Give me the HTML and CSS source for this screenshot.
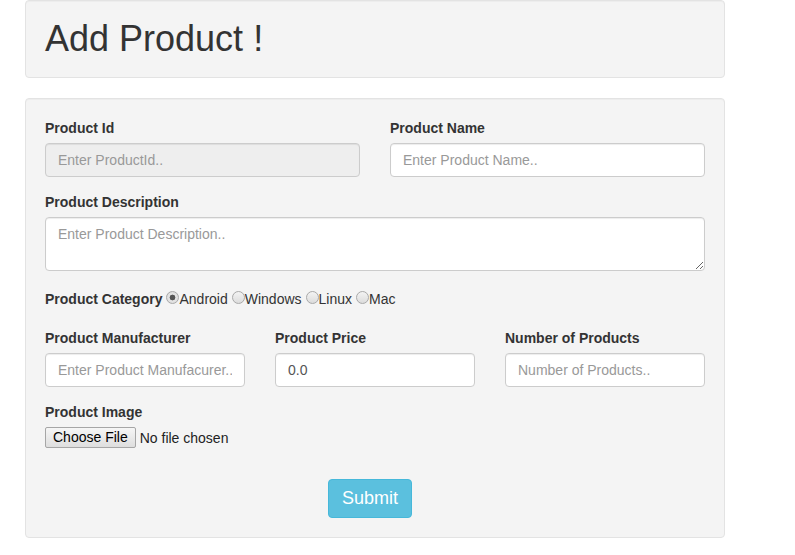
FILE: index.html
```html
<!DOCTYPE html>
<html>
<head>
<meta charset="utf-8">
<title>Add Product</title>
<link rel="stylesheet" href="styles.css">
</head>
<body>
<div class="page">
  <div class="well header">
    <h1 class="title">Add Product !</h1>
  </div>
  <form class="well form">
    <div class="row two">
      <div class="group">
        <label class="lbl">Product Id</label>
        <input class="ctl" type="text" placeholder="Enter ProductId.." disabled>
      </div>
      <div class="group">
        <label class="lbl">Product Name</label>
        <input class="ctl" type="text" placeholder="Enter Product Name..">
      </div>
    </div>
    <div class="group">
      <label class="lbl">Product Description</label>
      <textarea class="ctl area" rows="2" placeholder="Enter Product Description.."></textarea>
    </div>
    <div class="group category">
      <label class="lbl">Product Category</label>
      <label class="opt"><input class="radio" type="radio" name="cat" checked>Android</label>
      <label class="opt"><input class="radio" type="radio" name="cat">Windows</label>
      <label class="opt"><input class="radio" type="radio" name="cat">Linux</label>
      <label class="opt"><input class="radio" type="radio" name="cat">Mac</label>
    </div>
    <div class="row three">
      <div class="group">
        <label class="lbl">Product Manufacturer</label>
        <input class="ctl" type="text" placeholder="Enter Product Manufacurer..">
      </div>
      <div class="group">
        <label class="lbl">Product Price</label>
        <input class="ctl" type="text" value="0.0">
      </div>
      <div class="group">
        <label class="lbl">Number of Products</label>
        <input class="ctl" type="text" placeholder="Number of Products..">
      </div>
    </div>
    <div class="group">
      <label class="lbl">Product Image</label>
      <div class="file">
        <span class="file-btn">Choose File</span>
        <span class="file-text">No file chosen</span>
      </div>
    </div>
    <div class="actions">
      <button class="submit" type="button">Submit</button>
    </div>
  </form>
</div>
</body>
</html>
```
FILE: styles.css
```css
* { box-sizing: border-box; }
html, body {
  margin: 0;
  padding: 0;
  background: #fff;
}
body {
  font-family: "Liberation Sans", Arial, Helvetica, sans-serif;
  font-size: 14px;
  line-height: 20px;
  color: #333;
}
.page {
  width: 700px;
  margin-left: 25px;
}
.well {
  display: block;
  background: #f4f4f4;
  border: 1px solid #e3e3e3;
  border-radius: 4px;
  box-shadow: inset 0 1px 1px rgba(0,0,0,0.03);
}
.header {
  padding: 18px 19px 18px;
  margin-bottom: 20px;
}
.title {
  margin: 0;
  font-size: 36px;
  line-height: 40px;
  font-weight: 500;
  color: #333;
}
.form {
  padding: 19px;
  margin: 0;
}
.row {
  display: grid;
  column-gap: 30px;
}
.two { grid-template-columns: 1fr 1fr; }
.three { grid-template-columns: 1fr 1fr 1fr; }
.group {
  margin-bottom: 15px;
}
.lbl {
  display: block;
  font-weight: bold;
  margin-bottom: 5px;
}
.ctl {
  display: block;
  width: 100%;
  height: 34px;
  padding: 6px 12px;
  font-family: inherit;
  font-size: 14px;
  line-height: 20px;
  color: #555;
  background: #fff;
  border: 1px solid #ccc;
  border-radius: 4px;
  box-shadow: inset 0 1px 1px rgba(0,0,0,0.075);
  margin: 0;
}
.ctl::placeholder { color: #999; opacity: 1; }
.ctl:disabled {
  background: #eee;
}
.area {
  height: 54px;
  resize: vertical;
}
.category {
  display: flex;
  align-items: center;
  height: 25px;
  margin-bottom: 17px;
}
.category .lbl {
  display: inline-block;
  margin: 0 4px 0 0;
}
.opt {
  display: inline-flex;
  align-items: center;
  margin-right: 4px;
}
.radio {
  -webkit-appearance: none;
  appearance: none;
  width: 13px;
  height: 13px;
  margin: 0;
  border: 1px solid #a9a9a9;
  border-radius: 50%;
  background: linear-gradient(#f3f3f3, #dcdcdc);
  position: relative;
  top: -1px;
}
.radio:checked {
  background: radial-gradient(circle, #555 0, #555 2.6px, #e6e6e6 3.2px, #dcdcdc 6px);
}
.file {
  display: flex;
  align-items: center;
  height: 21px;
  margin-top: 1px;
}
.file-btn {
  display: inline-block;
  height: 21px;
  padding: 0 7px;
  line-height: 19px;
  font-size: 14px;
  color: #000;
  border: 1px solid #a6a6a6;
  border-radius: 2px;
  background: linear-gradient(#f6f6f6, #dedede);
}
.file-text {
  margin-left: 4px;
  color: #222;
}
.actions {
  padding-left: 283px;
  padding-top: 16px;
}
.submit {
  display: block;
  height: 39px;
  width: 84px;
  padding: 0;
  font-family: inherit;
  font-size: 18px;
  line-height: 37px;
  color: #fff;
  background: #5bc0de;
  border: 1px solid #46b8da;
  border-radius: 4px;
}
```
